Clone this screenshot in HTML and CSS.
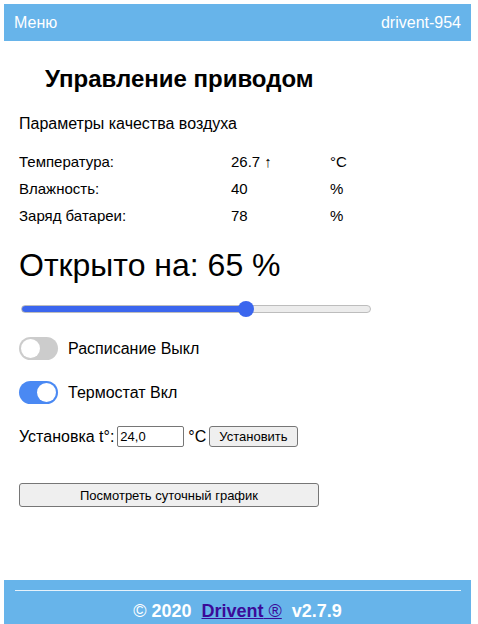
FILE: index.html
```html
<!DOCTYPE html>
<html lang="ru">
<head>
<meta charset="utf-8">
<title>Drivent</title>
<link rel="stylesheet" href="styles.css">
</head>
<body>
<div class="page">
  <header class="topbar">
    <span class="menu">Меню</span>
    <span class="device">drivent-954</span>
  </header>
  <main class="content">
    <h2 class="title">Управление приводом</h2>
    <p class="subtitle">Параметры качества воздуха</p>
    <div class="params">
      <span>Температура:</span><span>26.7 ↑</span><span>°C</span>
      <span>Влажность:</span><span>40</span><span>%</span>
      <span>Заряд батареи:</span><span>78</span><span>%</span>
    </div>
    <div class="open">Открыто на: 65 %</div>
    <input class="slider" type="range" min="0" max="100" value="65" style="--v:65%">
    <div class="toggle-row first">
      <span class="switch"><span class="knob"></span></span>
      <span class="toggle-label">Расписание Выкл</span>
    </div>
    <div class="toggle-row">
      <span class="switch on"><span class="knob"></span></span>
      <span class="toggle-label">Термостат Вкл</span>
    </div>
    <div class="setpoint">
      <span>Установка t°:</span>
      <input class="tinput" type="text" value="24,0">
      <span>°C</span>
      <button class="btn">Установить</button>
    </div>
    <button class="btn wide">Посмотреть суточный график</button>
  </main>
  <footer class="footer">
    <hr class="fline">
    <div class="ftext"><span class="copy">©</span> <b>2020</b>&nbsp; <a class="flink" href="#"><b>Drivent</b> ®</a>&nbsp; <b>v2.7.9</b></div>
  </footer>
</div>
</body>
</html>
```
FILE: styles.css
```css
html, body {
  margin: 0;
  padding: 0;
  height: 100%;
}
body {
  font-family: "Liberation Sans", Arial, sans-serif;
  color: #000;
  background: #fff;
}
.page {
  margin: 0 7px 0 4px;
  padding-top: 4px;
  height: 100%;
  box-sizing: border-box;
  display: flex;
  flex-direction: column;
  overflow: hidden;
}
.topbar {
  background: #67b4ea;
  color: #fff;
  height: 37px;
  display: flex;
  justify-content: space-between;
  align-items: center;
  padding: 0 10px;
  font-size: 16px;
  flex: none;
}
.content {
  flex: 1;
  padding: 0 15px;
}
.title {
  font-size: 24px;
  font-weight: bold;
  margin: 24px 0 0 26px;
  line-height: 28px;
}
.subtitle {
  font-size: 16px;
  margin: 22px 0 0;
  line-height: 18px;
}
.params {
  display: grid;
  grid-template-columns: 212px 99px auto;
  font-size: 15px;
  line-height: 18px;
  row-gap: 9px;
  margin-top: 20px;
}
.open {
  font-size: 32px;
  line-height: 36px;
  margin-top: 22px;
}
.slider {
  -webkit-appearance: none;
  appearance: none;
  display: block;
  width: 350px;
  height: 8px;
  margin: 22px 0 0 2px;
  border-radius: 4px;
  border: 1px solid #bdbdbd;
  box-sizing: border-box;
  background: linear-gradient(to right, #3b66ee 0, #3b66ee var(--v), #ececec var(--v), #ececec 100%);
  outline: none;
}
.slider::-webkit-slider-thumb {
  -webkit-appearance: none;
  appearance: none;
  width: 16px;
  height: 16px;
  border-radius: 50%;
  background: #3b66ee;
  border: none;
}
.toggle-row {
  display: flex;
  align-items: center;
  gap: 10px;
  margin-top: 21px;
}
.toggle-row.first {
  margin-top: 24px;
}
.switch {
  width: 39px;
  height: 23px;
  border-radius: 12px;
  background: #cccccc;
  display: flex;
  align-items: center;
  padding: 0 2px;
  box-sizing: border-box;
}
.switch .knob {
  width: 19px;
  height: 19px;
  border-radius: 50%;
  background: #fff;
}
.switch.on {
  background: #4a89f3;
  justify-content: flex-end;
}
.toggle-label {
  font-size: 16px;
}
.setpoint {
  display: flex;
  align-items: center;
  font-size: 16px;
  margin-top: 22px;
}
.tinput {
  width: 67px;
  height: 21px;
  box-sizing: border-box;
  margin: 0 4px 0 3px;
  border: 1px solid #767676;
  border-radius: 2px;
  font-family: "Liberation Sans", Arial, sans-serif;
  font-size: 13px;
  padding: 1px 2px;
}
.btn {
  font-family: "Liberation Sans", Arial, sans-serif;
  font-size: 13px;
  background: #efefef;
  border: 1px solid #767676;
  border-radius: 3px;
  color: #000;
  height: 21px;
  padding: 0 9px;
}
.setpoint .btn {
  margin-left: 3px;
}
.wide {
  display: block;
  width: 300px;
  height: 24px;
  margin-top: 36px;
}
.footer {
  flex: none;
  height: 44px;
  background: #67b4ea;
  color: #fff;
  font-size: 18px;
  text-align: center;
  padding: 10px 10px 0;
  box-sizing: border-box;
}
.fline {
  margin: 0 0 0 1px;
  border: none;
  border-top: 1px solid #e6f2fb;
  height: 0;
}
.ftext {
  margin-top: 9px;
  line-height: 22px;
}
.copy {
  font-weight: normal;
}
.flink {
  color: #3b0a98;
}
.flink b {
  font-weight: bold;
}
```
